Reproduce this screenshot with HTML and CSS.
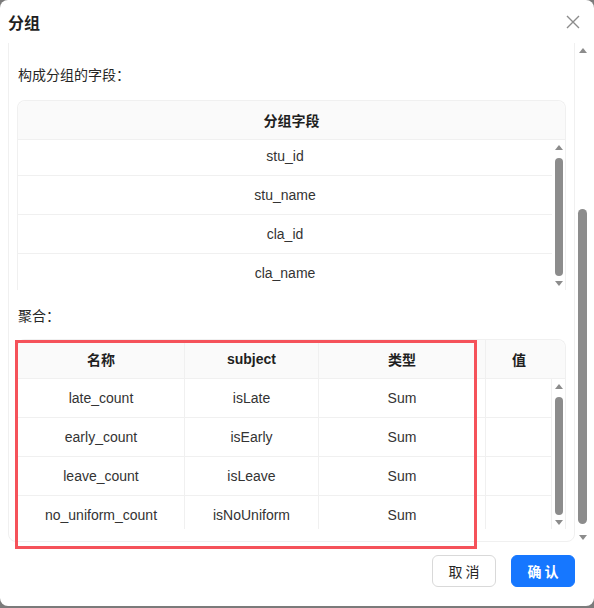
FILE: index.html
```html
<!DOCTYPE html>
<html lang="zh-CN">
<head>
    <meta charset="UTF-8">
    <meta name="viewport" content="width=device-width, initial-scale=1.0">
    <title>分组</title>
    <link rel="stylesheet" href="styles.css">
</head>
<body>
    <div class="dialog">
        <div class="dialog-head">
            <div class="dialog-title">分组</div>
            <button class="dialog-close" type="button">
                <svg width="14" height="14" viewBox="0 0 14 14">
                    <path d="M1 1L13 13M13 1L1 13" stroke="#8c8c8c" stroke-width="1.4" fill="none"/>
                </svg>
            </button>
        </div>

        <div class="dialog-body">
            <div class="body-view">
                <div class="card">
                    <div class="section">
                        <div class="section-title">构成分组的字段：</div>
                        <div class="table">
                            <div class="thead">
                                <div class="th">分组字段</div>
                            </div>
                            <div class="tbody">
                                <div class="rows">
                                    <div class="rows-inner scrolled">
                                        <div class="tr"><div class="td">stu_id</div></div>
                                        <div class="tr"><div class="td">stu_name</div></div>
                                        <div class="tr"><div class="td">cla_id</div></div>
                                        <div class="tr"><div class="td">cla_name</div></div>
                                    </div>
                                </div>
                                <div class="scrollbar">
                                    <span class="arrow arrow-up"></span>
                                    <span class="track"><span class="thumb thumb-top"></span></span>
                                    <span class="arrow arrow-down"></span>
                                </div>
                            </div>
                        </div>
                    </div>

                    <div class="section">
                        <div class="section-title">聚合：</div>
                        <div class="table table-agg">
                            <div class="thead">
                                <div class="th col-name">名称</div>
                                <div class="th col-subject">subject</div>
                                <div class="th col-type">类型</div>
                                <div class="th col-value">值</div>
                                <div class="th-gutter"></div>
                            </div>
                            <div class="tbody">
                                <div class="rows">
                                    <div class="rows-inner">
                                        <div class="tr">
                                            <div class="td col-name">late_count</div>
                                            <div class="td col-subject">isLate</div>
                                            <div class="td col-type">Sum</div>
                                            <div class="td col-value"></div>
                                        </div>
                                        <div class="tr">
                                            <div class="td col-name">early_count</div>
                                            <div class="td col-subject">isEarly</div>
                                            <div class="td col-type">Sum</div>
                                            <div class="td col-value"></div>
                                        </div>
                                        <div class="tr">
                                            <div class="td col-name">leave_count</div>
                                            <div class="td col-subject">isLeave</div>
                                            <div class="td col-type">Sum</div>
                                            <div class="td col-value"></div>
                                        </div>
                                        <div class="tr">
                                            <div class="td col-name">no_uniform_count</div>
                                            <div class="td col-subject">isNoUniform</div>
                                            <div class="td col-type">Sum</div>
                                            <div class="td col-value"></div>
                                        </div>
                                    </div>
                                </div>
                                <div class="scrollbar">
                                    <span class="arrow arrow-up"></span>
                                    <span class="track"><span class="thumb thumb-top"></span></span>
                                    <span class="arrow arrow-down"></span>
                                </div>
                            </div>
                        </div>
                    </div>
                </div>
            </div>
            <div class="scrollbar scrollbar-outer">
                <span class="arrow arrow-up"></span>
                <span class="track"><span class="thumb thumb-bottom"></span></span>
                <span class="arrow arrow-down"></span>
            </div>
        </div>

        <div class="dialog-foot">
            <button class="btn" type="button">取 消</button>
            <button class="btn btn-primary" type="button">确 认</button>
        </div>

        <!-- red marker around the aggregate columns -->
        <div class="highlight"></div>
    </div>
</body>
</html>
```

FILE: styles.css
```css
* {
    margin: 0;
    padding: 0;
    box-sizing: border-box;
}

body {
    font-family: "Liberation Sans", "Noto Sans CJK SC", sans-serif;
    font-size: 14px;
    color: #333;
    background: #7b7b7b;
    width: 594px;
    height: 608px;
    overflow: hidden;
}

.dialog {
    position: relative;
    width: 594px;
    height: 606px;
    background: #fff;
    border-radius: 8px;
    display: flex;
    flex-direction: column;
}

/* header */
.dialog-head {
    height: 43px;
    padding: 0 13px 0 8px;
    display: flex;
    align-items: center;
    justify-content: space-between;
    flex-shrink: 0;
}

.dialog-title {
    font-family: "Noto Sans CJK SC", sans-serif;
    font-size: 16px;
    font-weight: bold;
    color: #1f1f1f;
}

.dialog-close {
    border: none;
    background: none;
    width: 16px;
    height: 16px;
    display: flex;
    align-items: center;
    justify-content: center;
}

/* scrolling body */
.dialog-body {
    height: 502px;
    margin: 0 4px 0 8px;
    display: flex;
    flex-shrink: 0;
}

.body-view {
    width: 567px;
    overflow: hidden;
    display: flex;
    flex-direction: column;
    justify-content: flex-end;
    padding-bottom: 3px;
}

.card {
    flex-shrink: 0;
    border: 1px solid #f0f0f0;
    border-radius: 8px;
    padding: 30px 8px 12px 8px;
}

.section + .section {
    margin-top: 14px;
}

.section-title {
    font-family: "Noto Sans CJK SC", sans-serif;
    line-height: 22px;
    margin-bottom: 15px;
    padding-left: 1px;
    color: #262626;
}

.section + .section .section-title {
    margin-bottom: 13px;
}

/* tables */
.table {
    border: 1px solid #f0f0f0;
    border-bottom: none;
    border-radius: 8px 8px 0 0;
    height: 190px;
    display: flex;
    flex-direction: column;
}

.thead {
    height: 39px;
    background: #fafafa;
    border-bottom: 1px solid #f0f0f0;
    border-radius: 8px 8px 0 0;
    display: flex;
    flex-shrink: 0;
}

.th {
    flex: 1;
    display: flex;
    align-items: center;
    justify-content: center;
    font-weight: bold;
    color: #1f1f1f;
}

.th-gutter {
    flex: 0 0 13px;
}

.tbody {
    flex: 1;
    display: flex;
    overflow: hidden;
}

.rows {
    flex: 1;
    overflow: hidden;
}

/* first list is scrolled a few pixels */
.rows-inner.scrolled {
    margin-top: -3px;
}

.tr {
    height: 39px;
    display: flex;
    border-bottom: 1px solid #f0f0f0;
}

.td {
    flex: 1;
    display: flex;
    align-items: center;
    justify-content: center;
    color: #333;
}

.table-agg .col-name { flex: 0 0 166px; }
.table-agg .col-subject { flex: 0 0 134px; }
.table-agg .col-type { flex: 0 0 167px; }
.table-agg .col-value { flex: 1; }

.table-agg .th + .th,
.table-agg .td + .td {
    border-left: 1px solid #f0f0f0;
}

.table-agg .td.col-value {
    border-right: 1px solid #f0f0f0;
}

/* scrollbars */
.scrollbar {
    width: 13px;
    display: flex;
    flex-direction: column;
    align-items: center;
    flex-shrink: 0;
}

.scrollbar-outer {
    width: 15px;
}

.arrow {
    height: 15px;
    display: flex;
    align-items: center;
    justify-content: center;
    flex-shrink: 0;
}

.arrow::before {
    content: "";
    border-left: 4px solid transparent;
    border-right: 4px solid transparent;
}

.arrow-up::before {
    border-bottom: 5px solid #8c8c8c;
}

.arrow-down::before {
    border-top: 5px solid #8c8c8c;
}

.track {
    flex: 1;
    width: 100%;
    display: flex;
    flex-direction: column;
    align-items: center;
}

.thumb {
    width: 8px;
    background: #8c8c8c;
    border-radius: 4px;
}

.thumb-top {
    height: 118px;
    margin-top: 3px;
}

.scrollbar-outer .thumb {
    width: 9px;
    border-radius: 5px;
}

.thumb-bottom {
    height: 315px;
    margin-top: auto;
    margin-bottom: 6px;
}

.highlight {
    position: absolute;
    left: 15px;
    top: 340px;
    width: 462px;
    height: 209px;
    border: 3px solid #f5525a;
    pointer-events: none;
}

/* footer */
.dialog-foot {
    flex: 1;
    display: flex;
    justify-content: flex-end;
    gap: 15px;
    padding: 10px 19px 0 0;
}

.btn {
    width: 64px;
    height: 32px;
    border: 1px solid #d9d9d9;
    border-radius: 6px;
    background: #fff;
    font-family: "Noto Sans CJK SC", sans-serif;
    font-size: 14px;
    color: #262626;
}

.btn-primary {
    background: #1677ff;
    border-color: #1677ff;
    color: #fff;
    font-weight: bold;
}
```
